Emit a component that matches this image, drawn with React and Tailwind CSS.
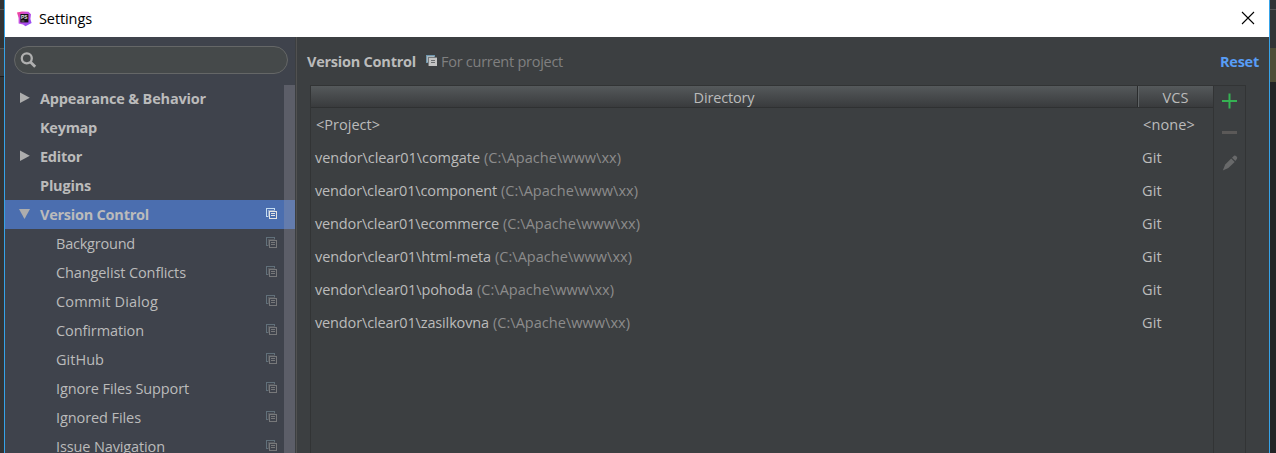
import { useLayoutEffect, useRef } from 'react';

// Single-line label whose letter spacing is adjusted so that it spans `w` pixels.
function Label({ w, className = '', children }) {
  const ref = useRef(null);
  useLayoutEffect(() => {
    const el = ref.current;
    const fit = () => {
      el.style.letterSpacing = '0px';
      const natural = el.getBoundingClientRect().width;
      el.style.letterSpacing = `${(w - natural) / el.textContent.length}px`;
    };
    fit();
    document.fonts?.ready.then(fit);
  }, [w]);
  return (
    <span ref={ref} className={`inline-block shrink-0 whitespace-pre ${className}`}>
      {children}
    </span>
  );
}

const groups = [
  { name: 'Appearance & Behavior', w: 166, arrow: 'right' },
  { name: 'Keymap', w: 57 },
  { name: 'Editor', w: 42, arrow: 'right' },
  { name: 'Plugins', w: 51 },
  { name: 'Version Control', w: 109, arrow: 'down', selected: true },
];

const pages = [
  ['Background', 79],
  ['Changelist Conflicts', 130],
  ['Commit Dialog', 102],
  ['Confirmation', 88],
  ['GitHub', 48],
  ['Ignore Files Support', 133],
  ['Ignored Files', 85],
  ['Issue Navigation', 109],
];

const mappings = [
  ['comgate', 165],
  ['component', 182],
  ['ecommerce', 184],
  ['html-meta', 176],
  ['pohoda', 158],
  ['zasilkovna', 174],
];

function CopyIcon({ bright }) {
  const front = bright ? '#e4e4e4' : '#77787a';
  return (
    <svg width="12" height="12" viewBox="0 0 12 12" fill="none" className="shrink-0" shapeRendering="crispEdges">
      <path d="M2 8.5H.5V.5H8.5V2" stroke={bright ? '#c3dcf2' : '#61707a'} />
      <path d="M2.5 9V2.5H9" stroke={bright ? '#8ba3cb' : '#565a60'} />
      <rect x="3.5" y="3.5" width="7" height="7" stroke={front} />
      <path d="M5 5.5H9M5 7.5H9" stroke={front} />
    </svg>
  );
}

function ProjectIcon() {
  return (
    <svg width="11" height="11" viewBox="0 0 11 11" className="shrink-0" shapeRendering="crispEdges">
      <path d="M0 0H9V2H2V8H0Z" fill="#6f96ad" />
      <path d="M1 1H8V7H1Z" fill="#a9b6bd" />
      <path d="M2 2H11V11H2Z" fill="#75787a" />
      <path d="M3 3H11V11H3Z" fill="#c3c3c3" />
      <path d="M5 5.5H9M5 7.5H9" stroke="#6a6d6f" />
    </svg>
  );
}

function Arrow({ dir }) {
  return (
    <svg width="12" height="12" viewBox="0 0 12 12" fill="#adadad">
      {dir === 'right' && <path d="M1 .5L10.8 5.8L1 11Z" />}
      {dir === 'down' && <path d="M0 1H11L5.5 11Z" />}
    </svg>
  );
}

function AppLogo() {
  return (
    <svg width="15" height="16" viewBox="0 0 15 16" className="shrink-0">
      <defs>
        <linearGradient id="logo" x1="0" y1="0" x2="1" y2="1">
          <stop offset="0" stopColor="#ff3d86" />
          <stop offset=".4" stopColor="#c650e0" />
          <stop offset="1" stopColor="#8a4df8" />
        </linearGradient>
      </defs>
      <path d="M0 1.6L5 .4L11.4 .8L14 3.2L13.4 8L14.6 12L8.5 15.2L6 13.4L1.6 12.5L1.6 7Z" fill="url(#logo)" />
      <rect x="3.4" y="3" width="8" height="8.4" fill="#141014" />
      <text x="4" y="7.7" fontSize="4.8" fontWeight="700" fontFamily="Liberation Sans, sans-serif" fill="#e8e8e8">PS</text>
      <path d="M4.4 10H7.4" stroke="#9a9a9a" strokeWidth=".9" />
    </svg>
  );
}

function Sidebar() {
  return (
    <aside className="relative flex w-[290px] shrink-0 flex-col overflow-hidden bg-[#3f434c]">
      <div className="ml-[9px] mt-[9px] flex h-[28px] w-[274px] shrink-0 items-center rounded-full border border-[#656767] bg-[#45494a] pl-[5px]">
        <svg width="17" height="17" viewBox="0 0 17 17" fill="none" stroke="#b0b0b0">
          <circle cx="6.8" cy="6.3" r="5" strokeWidth="2.3" />
          <path d="M10.4 10L15.2 14.8" strokeWidth="2.8" />
        </svg>
      </div>
      <ul className="mt-[10px]">
        {groups.map((g) => (
          <li key={g.name} className={`flex h-[29px] items-center pl-[14px] ${g.selected ? 'bg-[#4b6eaf]' : ''}`}>
            <span className="mb-[2px] w-[21px]"><Arrow dir={g.arrow} /></span>
            <Label w={g.w} className="font-bold">{g.name}</Label>
            {g.selected && <span className="mb-px ml-auto mr-[17px]"><CopyIcon bright /></span>}
          </li>
        ))}
        {pages.map(([name, w]) => (
          <li key={name} className="flex h-[29px] items-center pl-[51px]">
            <Label w={w}>{name}</Label>
            <span className="mb-px ml-auto mr-[17px]"><CopyIcon /></span>
          </li>
        ))}
      </ul>
      <div className="absolute bottom-0 right-0 top-[48px] w-[11px] bg-[#a0a0a8]/30" />
    </aside>
  );
}

function Toolbar() {
  return (
    <div className="flex w-[32px] flex-col items-center border-r border-t border-[#323435] pt-[7px]">
      <svg width="15" height="16" viewBox="0 0 15 16" stroke="#35b253" strokeWidth="2">
        <path d="M7.5 .5V15.5M0 8H15" />
      </svg>
      <svg width="15" height="3" viewBox="0 0 15 3" className="mt-[22px]">
        <path d="M0 0H15V3H0Z" fill="#5b5958" />
      </svg>
      <svg width="16" height="16" viewBox="0 0 16 16" className="mt-[21px]" fill="#68696a">
        <path d="M.8 15.5L3.2 9.5L9.2 3.5L12.7 7L6.3 13Z" />
        <path d="M10 2.7L12 .8Q13 .2 14.4 1.3Q15.8 2.6 15 3.8L13.4 6.1Z" />
      </svg>
    </div>
  );
}

function VcsTable() {
  return (
    <div className="ml-[13px] flex flex-1">
      <div className="flex w-[904px] flex-col border-x border-t border-[#323435]">
        <div className="flex h-[22px] shrink-0 items-center border-b border-[#2f3132] bg-linear-to-b from-[#55595b] to-[#393b3d]">
          <div className="flex h-full w-[827px] items-center justify-center border-r border-[#2a2c2d]">
            <Label w={61} className="mt-[3px]">Directory</Label>
          </div>
          <div className="flex h-full flex-1 items-center justify-center border-l border-[#606466] pr-px">
            <Label w={26} className="mt-[3px]">VCS</Label>
          </div>
        </div>
        <div className="flex h-[33px] items-center pl-[5px] pt-px">
          <div className="w-[827px]"><Label w={64}>{'<Project>'}</Label></div>
          <Label w={52}>{'<none>'}</Label>
        </div>
        {mappings.map(([name, w]) => (
          <div key={name} className="flex h-[33px] items-center pl-[4px] pt-px">
            <div className="flex w-[827px] items-center gap-[4px]">
              <Label w={w}>{'vendor\\clear01\\' + name}</Label>
              <Label w={137} className="text-[#8c8c8c]">{'(C:\\Apache\\www\\xx)'}</Label>
            </div>
            <Label w={20}>Git</Label>
          </div>
        ))}
      </div>
      <Toolbar />
    </div>
  );
}

export default function App() {
  return (
    <div className="flex h-[453px] w-[1276px] overflow-hidden bg-[#2b2b2b] font-['Open_Sans','Noto_Sans',sans-serif] text-[14.5px] leading-[20px] text-[#bbbbbb]">
      <div className="flex w-[4px] shrink-0 flex-col bg-[#2b2b2b]">
        <div className="h-[10px] border-b border-[#555555] bg-[#313335]" />
        <div className="h-[39px] border-b border-[#555555] bg-[#313335]" />
        <div className="h-[28px] border-b border-[#1d1d1d] bg-[#3c3f41]" />
        <div className="flex-1 bg-[#323435]" />
      </div>
      <div className="flex w-[1266px] shrink-0 flex-col border-x border-[#36a3e8] bg-[#3c3f41]">
        <header className="flex h-[37px] shrink-0 items-center bg-white pl-[12px] pr-[14px] text-black">
          <AppLogo />
          <Label w={53} className="ml-[7px]">Settings</Label>
          <svg width="14" height="14" viewBox="0 0 14 14" className="ml-auto mt-[-1px]" stroke="#000" strokeWidth="1.1">
            <path d="M1 1L13 13M13 1L1 13" />
          </svg>
        </header>
        <div className="flex min-h-0 flex-1">
          <Sidebar />
          <main className="ml-px flex flex-1 flex-col border-l border-[#515151]">
            <div className="flex h-[48px] shrink-0 items-center pl-[10px] pr-[10px] pt-[2px]">
              <Label w={109} className="font-bold">Version Control</Label>
              <span className="mb-[4px] ml-[10px]"><ProjectIcon /></span>
              <Label w={122} className="ml-[4px] text-[#808080]">For current project</Label>
              <Label w={39} className="ml-auto font-bold text-[#589df6]">Reset</Label>
            </div>
            <VcsTable />
          </main>
        </div>
      </div>
      <div className="flex w-[6px] shrink-0 flex-col bg-[#232425]">
        <div className="h-[10px] border-b border-[#555555] bg-[#313335]" />
        <div className="h-[38px] bg-[#323435]" />
        <div className="h-[34px] bg-[#4e4d36]" />
      </div>
    </div>
  );
}
